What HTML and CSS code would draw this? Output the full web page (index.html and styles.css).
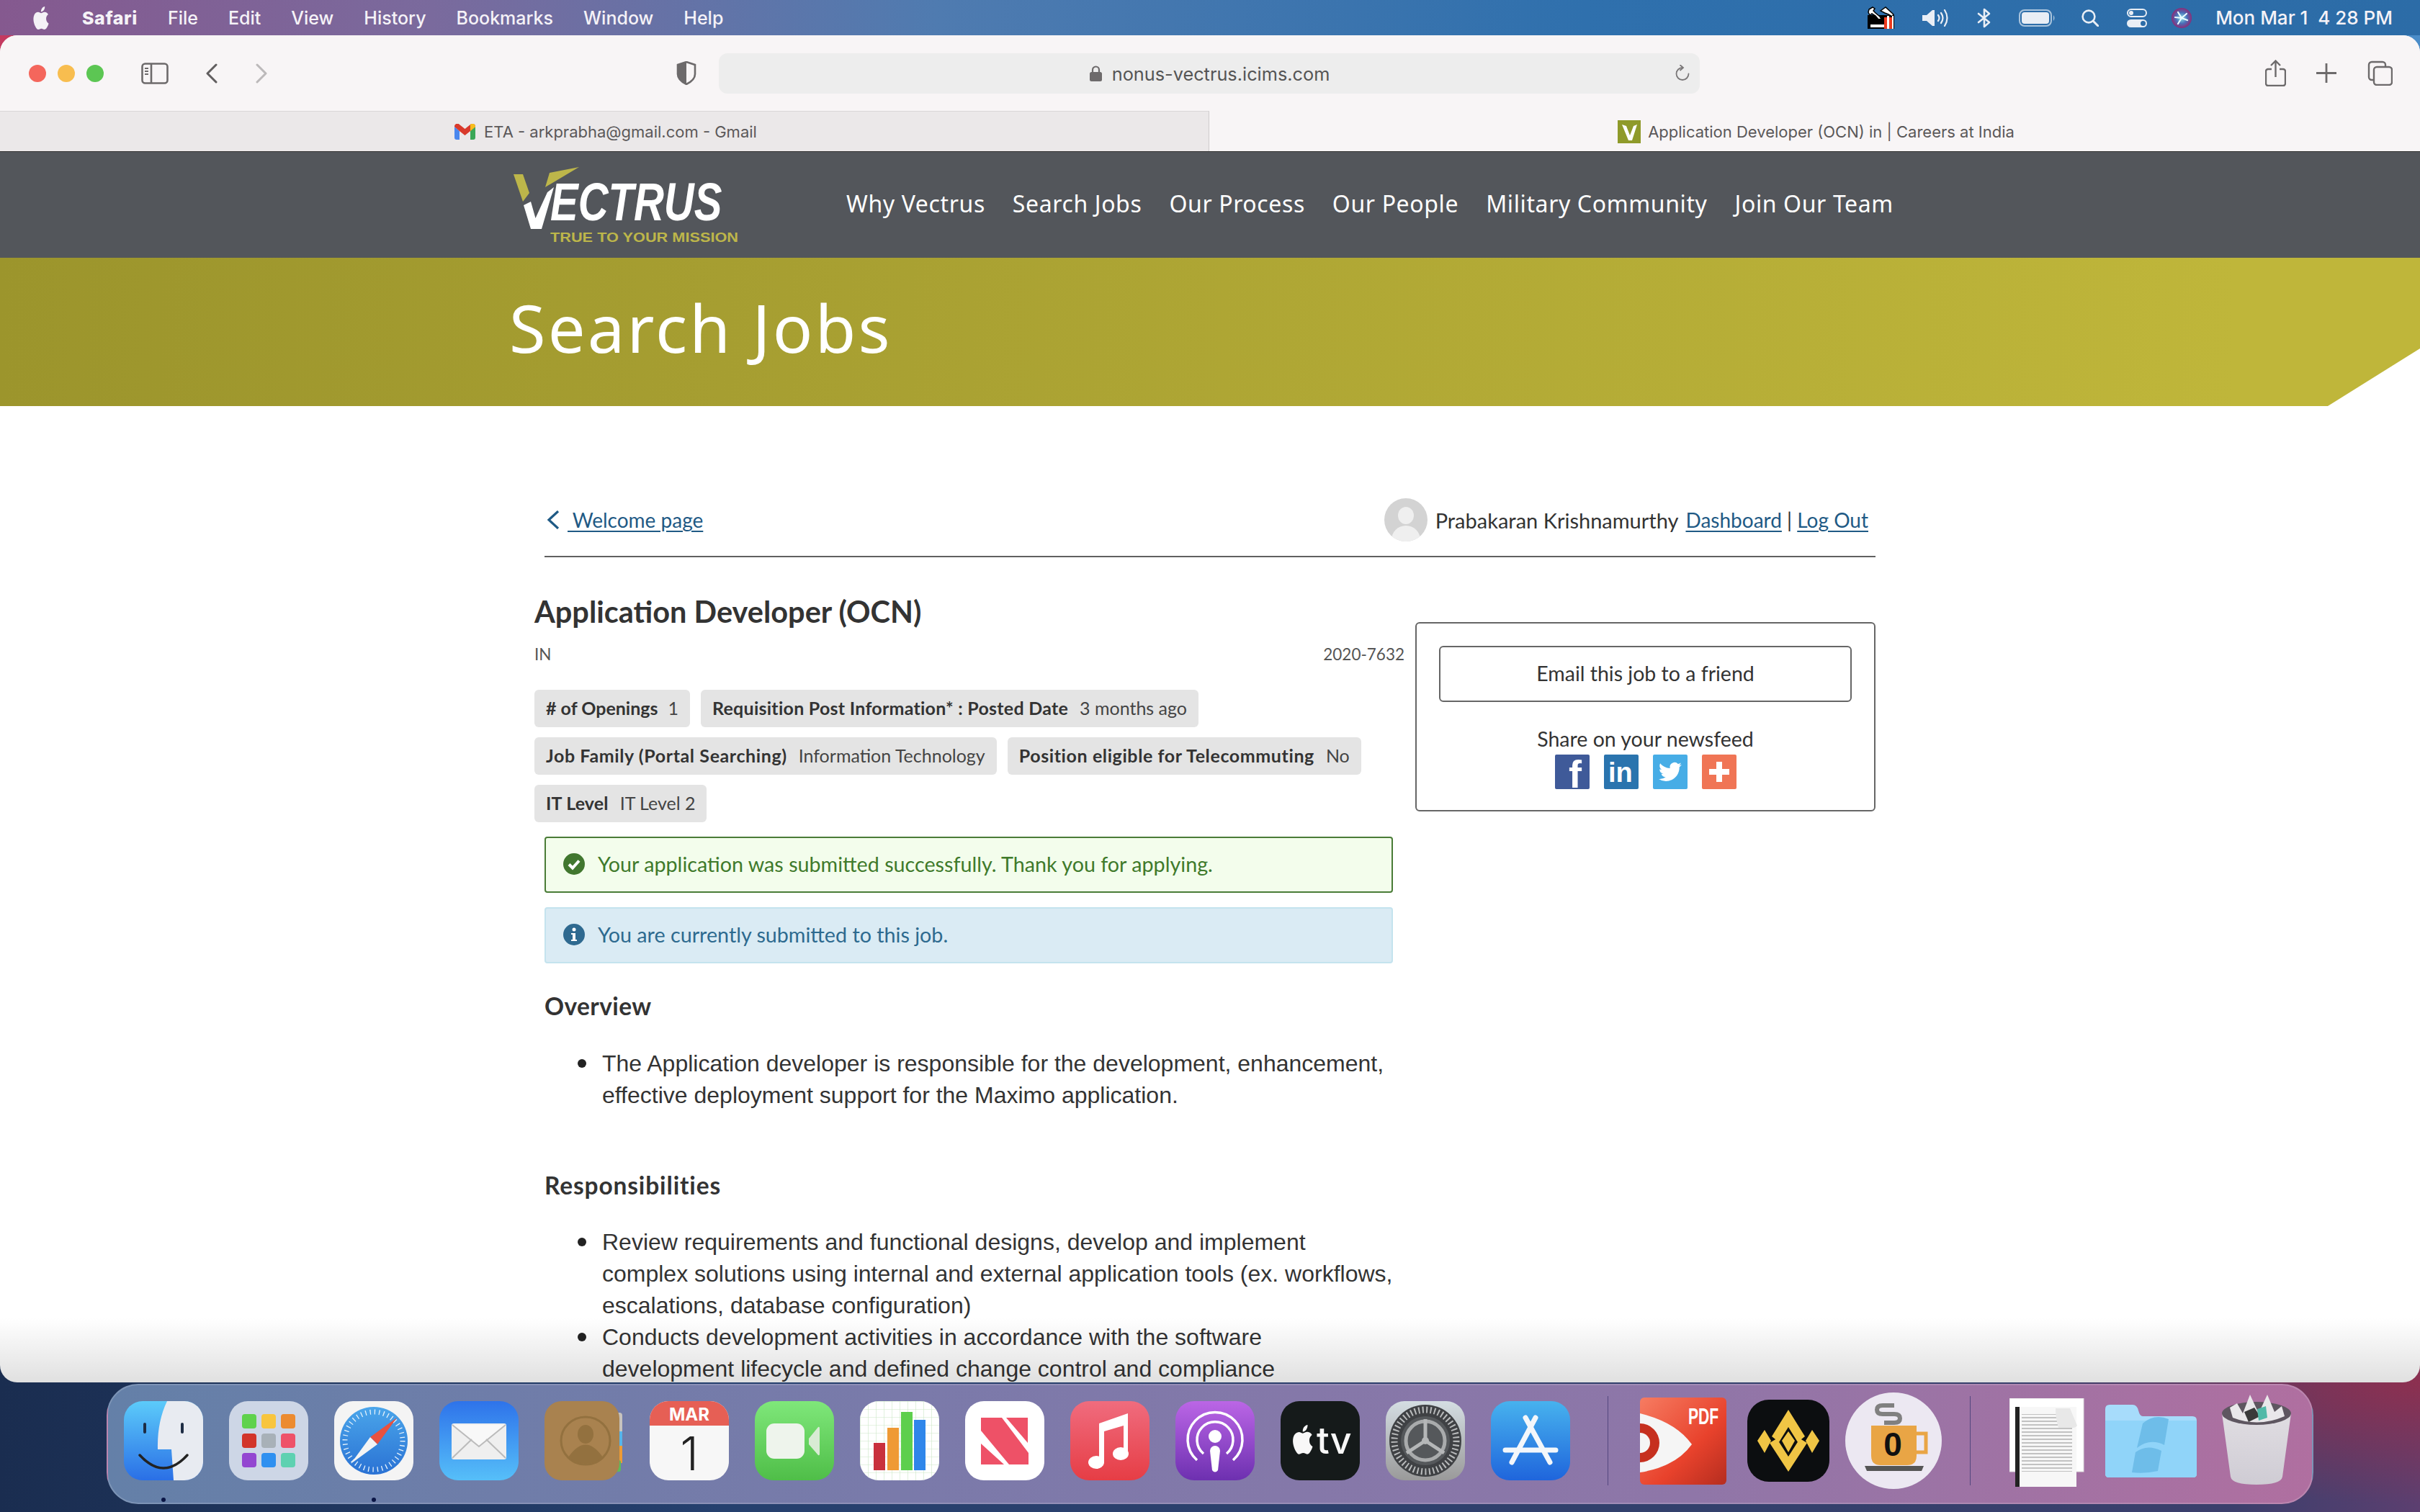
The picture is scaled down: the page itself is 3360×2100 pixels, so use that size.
FILE: index.html
```html
<!DOCTYPE html>
<html lang="en">
<head>
<meta charset="utf-8">
<title>Application Developer (OCN)</title>
<link rel="stylesheet" href="styles.css">
</head>
<body>
<header class="menubar">
  <svg class="apple" width="26" height="32" viewBox="0 0 24 24" preserveAspectRatio="none"><path fill="#f4f1f6" d="M12.152 6.896c-.948 0-2.415-1.078-3.96-1.04-2.04.027-3.91 1.183-4.961 3.014-2.117 3.675-.546 9.103 1.519 12.09 1.013 1.454 2.208 3.09 3.792 3.039 1.52-.065 2.09-.987 3.935-.987 1.831 0 2.35.987 3.96.948 1.637-.026 2.676-1.48 3.676-2.948 1.156-1.688 1.636-3.325 1.662-3.415-.039-.013-3.182-1.221-3.22-4.857-.026-3.04 2.48-4.494 2.597-4.559-1.429-2.09-3.623-2.324-4.39-2.376-2-.156-3.675 1.09-4.61 1.09zM15.53 3.83c.843-1.012 1.4-2.427 1.245-3.83-1.207.052-2.662.805-3.532 1.818-.78.896-1.454 2.338-1.273 3.714 1.338.104 2.715-.688 3.559-1.701"/></svg>
  <nav class="menu">
    <span class="menu-app">Safari</span><span>File</span><span>Edit</span><span>View</span><span>History</span><span>Bookmarks</span><span>Window</span><span>Help</span>
  </nav>
  <div class="status">
    <svg class="st-tools" width="39" height="33" viewBox="0 0 39 33"><path d="M1 13h37v19H1z" fill="#000"/><path d="M5 26h20v4H5z" fill="#fff"/><path d="M3 5l5-3 3 2-2 3 3 3 6 5 2 3-4 1-4-5-5-3-3 2-2-4z" fill="#fff" stroke="#000" stroke-width="1.500"/><path d="M19 7l7-5 11 10-2 3-5-3-5-2z" fill="#fff" stroke="#000" stroke-width="1.500"/><path d="M24 16h4v16h-4zM31 16h4v16h-4z" fill="#ee3a1e"/><path d="M28 14h3v18h-3z" fill="#fff"/><path d="M35 14h2v18h-2z" fill="#fff"/></svg>
    <svg class="st-speaker" width="36" height="24" viewBox="0 0 36 24"><path d="M0 8h6l8-7h3v22h-3l-8-7H0z" fill="#e9eef5"/><path d="M22 8q3 4 0 8M26 5q5 7 0 14M31 1q7 11 0 22" fill="none" stroke="#e9eef5" stroke-width="2.200" stroke-linecap="round"/></svg>
    <svg class="st-bt" width="20" height="28" viewBox="0 0 20 28"><path d="M2 8l15 12-7 6V2l7 6L2 20" fill="none" stroke="#e9eef5" stroke-width="2.600" stroke-linejoin="round" stroke-linecap="round"/></svg>
    <svg class="st-battery" width="51" height="24" viewBox="0 0 51 24"><rect x="1" y="1" width="44" height="22" rx="7" fill="none" stroke="#a9c4dd" stroke-width="2"/><rect x="4" y="4" width="38" height="16" rx="4" fill="#e9eef5"/><path d="M48 8q3 4 0 8z" fill="#a9c4dd"/></svg>
    <svg class="st-search" width="24" height="24" viewBox="0 0 24 24"><circle cx="10" cy="10" r="8.400" fill="none" stroke="#e9eef5" stroke-width="2.600"/><path d="M16 16l7 7" stroke="#e9eef5" stroke-width="3" stroke-linecap="round"/></svg>
    <svg class="st-control" width="28" height="26" viewBox="0 0 28 26"><rect x="1" y="1" width="26" height="10" rx="5" fill="none" stroke="#e9eef5" stroke-width="2"/><circle cx="6" cy="6" r="3" fill="#e9eef5"/><rect y="15" width="28" height="11" rx="5.500" fill="#e9eef5"/><circle cx="22.500" cy="20.500" r="3.500" fill="#2c6ca7"/></svg>
    <svg class="st-siri" width="28" height="28" viewBox="0 0 28 28"><defs><radialGradient id="siri"><stop offset="0" stop-color="#8fe8e8"/><stop offset=".55" stop-color="#4a6fb8"/><stop offset="1" stop-color="#8a2d78"/></radialGradient></defs><circle cx="14" cy="14" r="14" fill="url(#siri)"/><path d="M14 14L9 6M14 14l7-6M14 14l8 3M14 14l-5 8M14 14l-9-1" stroke="#eafcff" stroke-width="2.200" stroke-linecap="round"/></svg>
    <span class="clock">Mon Mar 1&nbsp; 4 28 PM</span>
  </div>
</header>

<main class="window">
  <div class="toolbar">
    <span class="light light-red"></span><span class="light light-yellow"></span><span class="light light-green"></span>
    <svg class="tb-side" width="38" height="30" viewBox="0 0 38 30"><rect x="1.500" y="1.500" width="35" height="27" rx="4" fill="none" stroke="#6d6a6b" stroke-width="2.600"/><path d="M14 2v26" stroke="#6d6a6b" stroke-width="2.600"/><path d="M5 8h5M5 12h5M5 16h5" stroke="#6d6a6b" stroke-width="2"/></svg>
    <svg class="tb-back" width="17" height="28" viewBox="0 0 17 28"><path d="M15 2L3 14l12 12" fill="none" stroke="#615e5f" stroke-width="3" stroke-linecap="round" stroke-linejoin="round"/></svg>
    <svg class="tb-fwd" width="17" height="28" viewBox="0 0 17 28"><path d="M2 2l12 12L2 26" fill="none" stroke="#bcb9ba" stroke-width="3" stroke-linecap="round" stroke-linejoin="round"/></svg>
    <svg class="tb-shield" width="28" height="33" viewBox="0 0 28 33"><path d="M14 1l12 4v13c0 7-6 11-12 14C8 29 2 25 2 18V5z" fill="#f8f5f6" stroke="#6d6a6b" stroke-width="2.600"/><path d="M14 1L2 5v13c0 7 6 11 12 14z" fill="#6d6a6b"/></svg>
    <div class="url">
      <svg class="url-lock" width="19" height="23" viewBox="0 0 19 23"><rect x="1" y="9" width="17" height="13" rx="2.500" fill="#6d6a6b"/><path d="M5 10V6a4.500 4.500 0 019 0v4" fill="none" stroke="#6d6a6b" stroke-width="2.200"/></svg>
      <span>nonus-vectrus.icims.com</span>
      <svg class="url-reload" width="24" height="24" viewBox="0 0 24 24"><path d="M12 4a8.500 8.500 0 1 0 8.500 8.500" fill="none" stroke="#7a7778" stroke-width="1.800" stroke-linecap="round"/><path d="M9 .5L13 4 9 7.500" fill="none" stroke="#7a7778" stroke-width="1.800" stroke-linecap="round"/></svg>
    </div>
    <svg class="tb-share" width="29" height="37" viewBox="0 0 29 37"><path d="M9 13H4a3 3 0 00-3 3v17a3 3 0 003 3h21a3 3 0 003-3V16a3 3 0 00-3-3h-5" fill="none" stroke="#6d6a6b" stroke-width="2.400"/><path d="M14.500 24V2M8 8l6.500-6.500L21 8" fill="none" stroke="#6d6a6b" stroke-width="2.400"/></svg>
    <svg class="tb-plus" width="28" height="27" viewBox="0 0 28 27"><path d="M14 0v27M0 13.500h28" stroke="#6d6a6b" stroke-width="2.800"/></svg>
    <svg class="tb-tabs" width="35" height="35" viewBox="0 0 35 35"><path d="M8 27H6a4 4 0 01-4-4V6a4 4 0 014-4h15a4 4 0 014 4v2" fill="none" stroke="#6d6a6b" stroke-width="2.400"/><rect x="9" y="9" width="25" height="25" rx="4" fill="none" stroke="#6d6a6b" stroke-width="2.400"/></svg>
  </div>

  <div class="tabs">
    <div class="tab tab-idle">
      <svg width="29" height="22" viewBox="0 0 29 22"><path d="M0 4v15a3 3 0 003 3h4V10z" fill="#4a87ee"/><path d="M29 4v15a3 3 0 01-3 3h-4V10z" fill="#3ba757"/><path d="M0 4a4 4 0 017-3l7.500 6L22 1a4 4 0 017 3l-7 6-7.500 6L7 10z" fill="#d93a2c"/><path d="M22 1a4 4 0 017 3l-7 6z" fill="#f6bd1b"/></svg>
      <span>ETA - arkprabha@gmail.com - Gmail</span>
    </div>
    <div class="tab tab-active">
      <svg width="32" height="32" viewBox="0 0 32 32"><rect width="32" height="32" fill="#8f9a2a"/><path d="M6 6l9 22h5l7-22-5 2-5 13-5-13z" fill="#fff"/></svg>
      <span>Application Developer (OCN) in | Careers at India</span>
    </div>
  </div>

  <div class="sitenav">
    <svg class="logo" width="340" height="120" viewBox="0 0 340 120">
      <polygon points="13,17 26,17 35,43 26,55" fill="#bdb64a"/>
      <polygon points="57,35 63,15 104,7" fill="#bdb64a"/>
      <polygon points="27,60 37,55 43.500,78 60,42 69,35 52,93 37,93" fill="#fff"/>
      <text class="logo-word" transform="translate(64 81) scale(1 1.270)">ECTRUS</text>
      <text class="logo-tag" x="64" y="111" textLength="261" lengthAdjust="spacingAndGlyphs">TRUE TO YOUR MISSION</text>
    </svg>
    <nav class="sitelinks">
      <a>Why Vectrus</a><a>Search Jobs</a><a>Our Process</a><a>Our People</a><a>Military Community</a><a>Join Our Team</a>
    </nav>
  </div>

  <div class="banner"><h1>Search Jobs</h1></div>

  <div class="page">
    <div class="userbar">
      <a class="back"><svg width="18" height="26" viewBox="0 0 18 26"><path d="M16 1L3 13l13 12" fill="none" stroke="#1f5a85" stroke-width="3.200"/></svg><span class="link back-link">&nbsp;Welcome page</span></a>
      <div class="user">
        <svg class="avatar" width="60" height="60" viewBox="0 0 60 60"><defs><clipPath id="av"><circle cx="30" cy="30" r="30"/></clipPath></defs><circle cx="30" cy="30" r="30" fill="#d3d3d3"/><g clip-path="url(#av)" fill="#efefef"><ellipse cx="30" cy="24" rx="11" ry="12"/><ellipse cx="30" cy="58" rx="20" ry="20"/></g></svg>
        <span class="user-name">Prabakaran Krishnamurthy</span>
        <span class="user-links"><span class="link">Dashboard</span> | <span class="link">Log Out</span></span>
      </div>
    </div>

    <div class="columns">
      <section class="job">
        <h2 class="job-title">Application Developer (OCN)</h2>
        <div class="job-meta"><span>IN</span><span>2020-7632</span></div>
        <div class="tags">
          <div class="tag tag-tight"><b># of Openings</b><span>1</span></div>
          <div class="tag tag-mid"><b>Requisition Post Information* : Posted Date</b><span>3 months ago</span></div>
          <div class="tag tag-wide"><b>Job Family (Portal Searching)</b><span>Information Technology</span></div>
          <div class="tag tag-wide"><b>Position eligible for Telecommuting</b><span>No</span></div>
          <div class="tag"><b>IT Level</b><span>IT Level 2</span></div>
        </div>
        <div class="body">
          <div class="alert alert-ok">
            <svg width="30" height="30" viewBox="0 0 30 30"><circle cx="15" cy="15" r="15" fill="#41772f"/><path d="M8 15.500l5 5 9-10" fill="none" stroke="#fff" stroke-width="4"/></svg>
            <span>Your application was submitted successfully. Thank you for applying.</span>
          </div>
          <div class="alert alert-info">
            <svg width="30" height="30" viewBox="0 0 30 30"><circle cx="15" cy="15" r="15" fill="#2f6a90"/><circle cx="15" cy="8" r="2.500" fill="#fff"/><path d="M11 13h6v9h2v2h-8v-2h2v-7h-2z" fill="#fff"/></svg>
            <span>You are currently submitted to this job.</span>
          </div>
          <h3>Overview</h3>
          <ul>
            <li>The Application developer is responsible for the development, enhancement, effective deployment support for the Maximo application.</li>
          </ul>
          <h3 class="h-resp">Responsibilities</h3>
          <ul>
            <li>Review requirements and functional designs, develop and implement complex solutions using internal and external application tools (ex. workflows, escalations, database configuration)</li>
            <li>Conducts development activities in accordance with the software development lifecycle and defined change control and compliance</li>
          </ul>
        </div>
      </section>

      <aside class="share">
        <button class="email">Email this job to a friend</button>
        <p>Share on your newsfeed</p>
        <div class="share-icons">
          <svg width="48" height="48" viewBox="0 0 48 48"><rect width="48" height="48" rx="2" fill="#3f5a99"/><text class="ic-f" x="19" y="46">f</text></svg>
          <svg width="48" height="48" viewBox="0 0 48 48"><rect width="48" height="48" rx="2" fill="#2a74ae"/><text class="ic-in" x="6" y="38">in</text></svg>
          <svg width="48" height="48" viewBox="0 0 48 48"><rect width="48" height="48" rx="2" fill="#47ade6"/><path transform="translate(8 8) scale(1.330)" fill="#fff" d="M23.953 4.570a10 10 0 01-2.825.775 4.958 4.958 0 002.163-2.723c-.951.555-2.005.959-3.127 1.184a4.920 4.920 0 00-8.384 4.482C7.690 8.095 4.067 6.130 1.640 3.162a4.822 4.822 0 00-.666 2.475c0 1.710.870 3.213 2.188 4.096a4.904 4.904 0 01-2.228-.616v.060a4.923 4.923 0 003.946 4.827 4.996 4.996 0 01-2.212.085 4.936 4.936 0 004.604 3.417 9.867 9.867 0 01-6.102 2.105c-.390 0-.779-.023-1.170-.067a13.995 13.995 0 007.557 2.209c9.053 0 13.998-7.496 13.998-13.985 0-.210 0-.420-.015-.630A9.935 9.935 0 0024 4.590z"/></svg>
          <svg width="48" height="48" viewBox="0 0 48 48"><rect width="48" height="48" rx="2" fill="#f07555"/><path d="M20 10h8v10h10v8H28v10h-8V28H10v-8h10z" fill="#fff"/></svg>
        </div>
      </aside>
    </div>
  </div>
</main>

<footer class="dock">
  <svg class="app" width="110" height="110" viewBox="0 0 110 110">
    <defs><linearGradient id="fb" x1="0" y1="0" x2="0" y2="1"><stop offset="0" stop-color="#5ccbfa"/><stop offset="1" stop-color="#2a6fe6"/></linearGradient><clipPath id="sq"><rect width="110" height="110" rx="26"/></clipPath></defs>
    <g clip-path="url(#sq)"><rect width="110" height="110" fill="url(#fb)"/><path d="M60 0h50v110H69l-3-43H47q-1-38 13-67z" fill="#e8ebf1"/></g>
    <path d="M29 32v11M81 32v11" stroke="#1d2c44" stroke-width="4" stroke-linecap="round"/>
    <path d="M22 75q33 36 66 0" fill="none" stroke="#222" stroke-width="3.500" stroke-linecap="round"/>
  </svg>
  <svg class="app" width="110" height="110" viewBox="0 0 110 110">
    <rect width="110" height="110" rx="26" fill="#cdd6e6"/>
    <rect x="18" y="18" width="20" height="20" rx="4" fill="#5fd24d"/><rect x="45" y="18" width="20" height="20" rx="4" fill="#f8c53e"/><rect x="72" y="18" width="20" height="20" rx="4" fill="#ec8b30"/>
    <rect x="18" y="45" width="20" height="20" rx="4" fill="#d2352a"/><rect x="45" y="45" width="20" height="20" rx="4" fill="#a8b1b8"/><rect x="72" y="45" width="20" height="20" rx="4" fill="#ee5269"/>
    <rect x="18" y="72" width="20" height="20" rx="4" fill="#9347d1"/><rect x="45" y="72" width="20" height="20" rx="4" fill="#2f90f0"/><rect x="72" y="72" width="20" height="20" rx="4" fill="#5ed1b1"/>
  </svg>
  <svg class="app" width="110" height="110" viewBox="0 0 110 110">
    <defs><linearGradient id="sb" x1="0" y1="0" x2="0" y2="1"><stop offset="0" stop-color="#4aa5ea"/><stop offset="1" stop-color="#2a72d4"/></linearGradient></defs>
    <rect width="110" height="110" rx="26" fill="#f4f4f4"/><circle cx="55" cy="55" r="47" fill="url(#sb)"/>
    <circle cx="55" cy="55" r="40" fill="none" stroke="#e6f2fb" stroke-width="7" stroke-dasharray="1.300 5"/>
    <polygon points="87,23 50,50 60,60" fill="#e8513f"/><polygon points="23,87 50,50 60,60" fill="#f4f4f4"/>
  </svg>
  <svg class="app" width="110" height="110" viewBox="0 0 110 110">
    <defs><linearGradient id="mb" x1="0" y1="0" x2="0" y2="1"><stop offset="0" stop-color="#2e73ea"/><stop offset="1" stop-color="#56bff9"/></linearGradient></defs>
    <rect width="110" height="110" rx="26" fill="url(#mb)"/><rect x="17" y="31" width="76" height="50" rx="3" fill="#efefef"/>
    <path d="M18 33l37 30 37-30" fill="#f8f8f8" stroke="#bbb" stroke-width="2"/><path d="M18 79l27-26M92 79L65 53" stroke="#bbb" stroke-width="2"/>
  </svg>
  <svg class="app" width="110" height="110" viewBox="0 0 110 110">
    <rect x="94" y="16" width="14" height="32" rx="4" fill="#c7c3bd"/><rect x="94" y="42" width="14" height="24" fill="#55b5ea"/><rect x="94" y="62" width="14" height="24" fill="#ed9b34"/><rect x="94" y="82" width="12" height="16" rx="3" fill="#5dbb5b"/>
    <rect width="104" height="110" rx="24" fill="#a9824f"/><ellipse cx="57" cy="55" rx="34" ry="33" fill="none" stroke="#93713f" stroke-width="3"/><ellipse cx="57" cy="46" rx="11" ry="13" fill="#93713f"/><path d="M33 78q24-35 48 0q-24 18-48 0" fill="#93713f"/>
  </svg>
  <svg class="app" width="110" height="110" viewBox="0 0 110 110">
    <defs><clipPath id="cal"><rect width="110" height="110" rx="26"/></clipPath></defs>
    <g clip-path="url(#cal)"><rect width="110" height="110" fill="#f7f7f7"/><rect width="110" height="34" fill="#e65f55"/></g>
    <text class="cal-mon" x="55" y="27">MAR</text><text class="cal-day" x="55" y="96">1</text>
  </svg>
  <svg class="app" width="110" height="110" viewBox="0 0 110 110">
    <defs><linearGradient id="ft" x1="0" y1="0" x2="0" y2="1"><stop offset="0" stop-color="#7fe77a"/><stop offset="1" stop-color="#4fbe48"/></linearGradient></defs>
    <rect width="110" height="110" rx="26" fill="url(#ft)"/><rect x="16" y="31" width="53" height="49" rx="11" fill="#eef4ec"/><path d="M75 52l13-16q2-1 2 2v35q0 3-2 2L75 60z" fill="#d8ebd4"/>
  </svg>
  <svg class="app" width="110" height="110" viewBox="0 0 110 110">
    <defs><pattern id="gr" width="11" height="11" patternUnits="userSpaceOnUse"><path d="M11 0H0v11" fill="none" stroke="#cde8c8" stroke-width="1.200"/></pattern><clipPath id="nu"><rect width="110" height="110" rx="26"/></clipPath></defs>
    <g clip-path="url(#nu)"><rect width="110" height="110" fill="#fff"/><rect width="110" height="110" fill="url(#gr)"/></g>
    <rect x="19" y="58" width="16" height="38" fill="#c9303c"/><rect x="38" y="37" width="16" height="59" fill="#ef9a35"/><rect x="57" y="15" width="16" height="81" fill="#5dcf4d"/><rect x="75" y="26" width="16" height="70" fill="#2f86ea"/>
  </svg>
  <svg class="app" width="110" height="110" viewBox="0 0 110 110">
    <rect width="110" height="110" rx="26" fill="#fff"/>
    <polygon points="22,23 51,23 88,72 88,88 61,88 22,41" fill="#ee5167"/><polygon points="57,23 87,23 87,58" fill="#ee5167"/><polygon points="22,59 22,88 54,88" fill="#ee5167"/>
  </svg>
  <svg class="app" width="110" height="110" viewBox="0 0 110 110">
    <defs><linearGradient id="mu" x1="0" y1="0" x2="0" y2="1"><stop offset="0" stop-color="#f06c7e"/><stop offset="1" stop-color="#e63d45"/></linearGradient></defs>
    <rect width="110" height="110" rx="26" fill="url(#mu)"/><path d="M40 31l40-14v53h-6V34L47 42v43h-7z" fill="#fff"/><ellipse cx="36" cy="85" rx="11" ry="9" fill="#fff"/><ellipse cx="70" cy="73" rx="11" ry="9" fill="#fff"/>
  </svg>
  <svg class="app" width="110" height="110" viewBox="0 0 110 110">
    <defs><linearGradient id="po" x1="0" y1="0" x2="0" y2="1"><stop offset="0" stop-color="#bb66e6"/><stop offset="1" stop-color="#6d30b0"/></linearGradient></defs>
    <rect width="110" height="110" rx="26" fill="url(#po)"/><path d="M30 82a38 38 0 1150 0" fill="none" stroke="#fff" stroke-width="3.500"/><path d="M39 73a25 25 0 1132 0" fill="none" stroke="#fff" stroke-width="3.500"/><circle cx="55" cy="49" r="9" fill="#fff"/><path d="M48 69a7 7 0 0114 0l-3 27q-4 5-8 0z" fill="#fff"/>
  </svg>
  <svg class="app" width="110" height="110" viewBox="0 0 110 110">
    <rect width="110" height="110" rx="26" fill="#151a1a"/><path transform="translate(14 33) scale(1.400 1.700)" fill="#f8f8f8" d="M12.152 6.896c-.948 0-2.415-1.078-3.960-1.040-2.040.027-3.910 1.183-4.961 3.014-2.117 3.675-.546 9.103 1.519 12.090 1.013 1.454 2.208 3.090 3.792 3.039 1.520-.065 2.090-.987 3.935-.987 1.831 0 2.350.987 3.960.948 1.637-.026 2.676-1.480 3.676-2.948 1.156-1.688 1.636-3.325 1.662-3.415-.039-.013-3.182-1.221-3.220-4.857-.026-3.040 2.480-4.494 2.597-4.559-1.429-2.090-3.623-2.324-4.390-2.376-2-.156-3.675 1.090-4.610 1.090zM15.530 3.830c.843-1.012 1.400-2.427 1.245-3.830-1.207.052-2.662.805-3.532 1.818-.780.896-1.454 2.338-1.273 3.714 1.338.104 2.715-.688 3.559-1.701"/><text class="tv" x="50" y="73">tv</text>
  </svg>
  <svg class="app" width="110" height="110" viewBox="0 0 110 110">
    <defs><linearGradient id="sp" x1="0" y1="0" x2="0" y2="1"><stop offset="0" stop-color="#d4dde2"/><stop offset="1" stop-color="#9a9a9a"/></linearGradient></defs>
    <rect width="110" height="110" rx="26" fill="url(#sp)"/><circle cx="55" cy="55" r="50" fill="#3f4144"/><circle cx="55" cy="55" r="43" fill="none" stroke="#b8babb" stroke-width="9" stroke-dasharray="2 3.500"/><circle cx="55" cy="55" r="34" fill="#55585b"/><circle cx="55" cy="55" r="27" fill="none" stroke="#a9abac" stroke-width="5"/><path d="M55 55V25M55 55L29 72M55 55l26 17" stroke="#b5b7b8" stroke-width="5"/><circle cx="55" cy="55" r="5" fill="#b5b7b8"/>
  </svg>
  <svg class="app" width="110" height="110" viewBox="0 0 110 110">
    <defs><linearGradient id="as" x1="0" y1="0" x2="0" y2="1"><stop offset="0" stop-color="#47b2ee"/><stop offset="1" stop-color="#1f65dc"/></linearGradient></defs>
    <rect width="110" height="110" rx="26" fill="url(#as)"/><path d="M62 23L29 85M48 23L82 85M20 68h70" fill="none" stroke="#f3f7fb" stroke-width="7" stroke-linecap="round"/>
  </svg>
  <span class="dock-sep"></span>
  <svg class="app app-pdf" width="120" height="121" viewBox="0 0 120 121">
    <defs><linearGradient id="pdf" x1="0" y1="0" x2="1" y2="1"><stop offset="0" stop-color="#f67c62"/><stop offset=".6" stop-color="#e8422c"/><stop offset="1" stop-color="#b52d1f"/></linearGradient><clipPath id="pc"><rect width="120" height="121" rx="6"/></clipPath></defs>
    <g clip-path="url(#pc)"><rect width="120" height="121" fill="url(#pdf)"/><path d="M0 22q50 12 72 43Q50 96 0 104z" fill="#f5f5f5"/><circle cx="0" cy="63" r="27" fill="#c6301f"/><circle cx="0" cy="63" r="14" fill="#f5f5f5"/></g>
    <text class="pdf-t" transform="translate(67 37) scale(.660 1)">PDF</text>
  </svg>
  <svg class="app app-bin" width="114" height="114" viewBox="0 0 114 114">
    <rect width="114" height="114" rx="30" fill="#0c0e10"/>
    <g fill="#f0c545"><path d="M57 14l23 37-10 8-13-21-13 21-10-8z"/><path d="M14 57l10-15 9 15-9 17zM57 44l9 13-9 16-9-16zM100 57l-10-15-9 15 9 17z"/><path d="M57 100L31 60l10-6 16 25 16-25 10 6z"/></g>
  </svg>
  <svg class="app app-coffee" width="134" height="134" viewBox="0 0 134 134">
    <circle cx="67" cy="67" r="67" fill="#ece8f2"/>
    <path d="M68 18H52q-8 0-8 6t8 6h16q8 0 8 6t-8 6H54" fill="none" stroke="#808080" stroke-width="6"/>
    <path d="M36 46h63v42q0 13-13 13H49q-13 0-13-13z" fill="#e9a545"/><path d="M99 57h13v26H99" fill="none" stroke="#e9a545" stroke-width="5"/>
    <path d="M27 102h82l-3 7H30z" fill="#555"/>
    <text class="cup-0" x="66" y="88">0</text>
  </svg>
  <span class="dock-sep dock-sep2"></span>
  <svg class="app app-doc" width="105" height="123" viewBox="0 0 105 123">
    <defs><pattern id="ln" width="60" height="5" patternUnits="userSpaceOnUse"><path d="M0 2h60" stroke="#8d8d8d" stroke-width="1"/></pattern></defs>
    <rect width="103" height="102" fill="#fff" stroke="#ddd"/><rect x="8" y="12" width="85" height="111" fill="#f7f7f7"/><rect x="8" y="12" width="6" height="111" fill="#222"/>
    <rect x="17" y="22" width="70" height="80" fill="url(#ln)"/><path d="M64 14h20l10 24q-2 3-5 3H68q-4-13-4-27z" fill="#e8e8e8"/>
  </svg>
  <svg class="app app-folder" width="127" height="101" viewBox="0 0 127 101">
    <path d="M0 6q0-6 6-6h32q6 0 8 8t6 8h69q6 0 6 6v74q0 5-5 5H5q-5 0-5-5z" fill="#a7dcfb"/><path d="M0 22h127v74q0 5-5 5H5q-5 0-5-5z" fill="#90d4f9"/><path d="M44 60q18-14 38-4l6-36q-20-8-36 6zM42 66q16-12 36-2l-5 28q-18 4-36 2z" fill="#6ebde9"/>
  </svg>
  <svg class="app app-trash" width="98" height="127" viewBox="0 0 98 127">
    <defs><linearGradient id="tr" x1="0" y1="0" x2="0" y2="1"><stop offset="0" stop-color="#e0dde2"/><stop offset="1" stop-color="#cfccd4"/></linearGradient></defs>
    <path d="M1 28q48 20 96 0l-12 88q-2 11-36 11T13 116z" fill="url(#tr)"/><ellipse cx="49" cy="28" rx="48" ry="16" fill="#5e5660"/><path d="M12 20l10-6 8 14 10-26 12 26 12-26 10 24 10-8 4 14q-36 16-72 2z" fill="#e9e7ea"/><path d="M32 26l14-6 8 12-16 8z" fill="#3a3a3a"/><path d="M50 22l12-4 2 16-12 4z" fill="#51b9a8"/>
  </svg>
  <span class="dot dot-a"></span><span class="dot dot-b"></span>
</footer>
</body>
</html>
```
FILE: styles.css
```css
* { box-sizing: border-box; }
html, body { margin: 0; padding: 0; }
body {
  width: 3360px;
  height: 2100px;
  overflow: hidden;
  position: relative;
  display: flex;
  flex-direction: column;
  font-family: "Lato", "Liberation Sans", sans-serif;
  background:
    linear-gradient(90deg, #c43a60 650px, #4a8cc8 650px) 0 45px / 100% 40px no-repeat,
    radial-gradient(520px 170px at 3360px 1920px, #8c3050 0, rgba(140, 48, 80, 0) 100%),
    linear-gradient(90deg, #1a2d50 0, #25406e 1000px, #33406c 2400px, #3b3f6c 3100px, #5c3f70 3360px);
}

/* menu bar */
.menubar {
  height: 49px;
  flex: none;
  display: flex;
  align-items: center;
  padding: 0 38px 0 44px;
  color: #f5f2f7;
  font-family: "Inter", "Liberation Sans", sans-serif;
  font-size: 25px;
  background: linear-gradient(90deg, #85598f 0, #7a6a9d 600px, #4f7bb0 1300px, #2f70ad 2200px, #2c6ca7 3360px);
}
.apple { margin-right: 44px; }
.menu { display: flex; gap: 42px; font-weight: 500; }
.menu-app { font-weight: 800; letter-spacing: .6px; }
.status { margin-left: auto; display: flex; align-items: center; gap: 36px; }
.st-tools { margin-right: 2px; }
.st-speaker { margin-right: 4px; }
.st-bt { margin-right: 2px; }
.st-search { margin-right: 3px; }
.st-control { margin-right: -2px; }
.st-siri { margin-right: -3px; }
.clock { font-weight: 500; font-size: 26px; }

/* window */
.window {
  height: 1871px;
  flex: none;
  position: relative;
  overflow: hidden;
  display: flex;
  flex-direction: column;
  background: #fff;
  border-radius: 24px;
}
.window::after {
  content: "";
  position: absolute;
  left: 0;
  right: 0;
  bottom: 0;
  height: 90px;
  background: linear-gradient(180deg, rgba(0, 0, 0, 0), rgba(0, 0, 0, .12));
  pointer-events: none;
}
.toolbar {
  height: 105px;
  flex: none;
  display: flex;
  align-items: center;
  padding: 0 38px 0 40px;
  background: #f8f5f6;
}
.light { width: 24px; height: 24px; border-radius: 50%; margin-right: 16px; }
.light-red { background: #f4665c; }
.light-yellow { background: #f8bd4f; }
.light-green { background: #5cc653; }
.tb-side { margin-left: 36px; }
.tb-back { margin-left: 51px; }
.tb-fwd { margin-left: 53px; }
.tb-shield { margin-left: 567px; }
.url {
  width: 1362px;
  height: 56px;
  margin-left: 31px;
  padding-top: 2px;
  position: relative;
  display: flex;
  align-items: center;
  justify-content: center;
  gap: 13px;
  border-radius: 12px;
  background: #ededed;
  font-family: "Inter", "Liberation Sans", sans-serif;
  font-size: 25.300px;
  color: #555;
}
.url-reload { position: absolute; right: 12px; top: 16px; }
.tb-share { margin-left: auto; }
.tb-plus { margin-left: 42px; }
.tb-tabs { margin-left: 43px; }

.tabs {
  height: 56px;
  flex: none;
  display: grid;
  grid-template-columns: 1679px 1fr;
  font-family: "Inter", "Liberation Sans", sans-serif;
  font-size: 22px;
  color: #5b5859;
}
.tab { display: flex; align-items: center; justify-content: center; gap: 12px; }
.tab-idle { background: #ebe8e9; border-top: 1px solid #d9d6d7; border-right: 1px solid #cfcccd; padding-left: 4px; }
.tab-active { background: #f8f5f6; border-top: 1px solid #f8f5f6; gap: 10px; padding-left: 4px; }

/* site header */
.sitenav {
  height: 148px;
  flex: none;
  display: flex;
  align-items: center;
  padding-left: 700px;
  background: #53565b;
  border-top: 1px solid #333;
}
.logo { flex: none; }
.logo-word { font: italic 700 58px "Liberation Sans", sans-serif; fill: #fff; }
.logo-tag { font: 700 18px "Liberation Sans", sans-serif; fill: #bdb64a; }
.sitelinks {
  display: flex;
  gap: 38px;
  margin-left: 135px;
  padding-bottom: 4px;
  color: #fff;
  font-family: "Noto Sans", sans-serif;
  font-size: 32px;
  letter-spacing: .62px;
}
.banner {
  height: 206px;
  flex: none;
  padding: 0 0 14px 707px;
  display: flex;
  align-items: center;
  background: linear-gradient(90deg, #9c952c 0, #a69e31 1000px, #bfb63a 3100px);
  clip-path: polygon(0 0, 100% 0, 100% 126px, 3232px 100%, 0 100%);
}
.banner h1 {
  margin: 0;
  font-family: "Noto Sans", sans-serif;
  font-weight: 400;
  font-size: 92px;
  letter-spacing: 3.200px;
  color: #fff;
}

/* page */
.page { width: 1862px; margin-left: 742px; color: #333; }
.userbar {
  margin-top: 130px;
  margin-left: 14px;
  height: 80px;
  padding-right: 10px;
  display: flex;
  justify-content: space-between;
  align-items: flex-start;
  border-bottom: 2px solid #606060;
  font-size: 29px;
}
.back { display: flex; align-items: center; height: 56px; padding-left: 3px; font-size: 28px; }
.back-link { margin-left: 11px; }
.link { color: #1f5a85; text-decoration: underline; text-underline-offset: 4px; }
.user { display: flex; align-items: center; height: 56px; }
.user-name { margin-left: 11px; }
.user-links { margin-left: 10px; font-size: 28px; }
.columns {
  display: grid;
  grid-template-columns: 1208px 639px;
  column-gap: 15px;
  margin-top: 47px;
  align-items: start;
}
.job-title { margin: 0; font-size: 41.500px; line-height: 56px; font-weight: 700; color: #333; }
.job-meta {
  margin-top: 17px;
  display: flex;
  justify-content: space-between;
  font-size: 22.500px;
  line-height: 30px;
  color: #555;
}
.tags { margin-top: 34px; display: flex; flex-wrap: wrap; gap: 14px 15px; }
.tag {
  height: 52px;
  padding: 0 16px 3px;
  display: flex;
  align-items: center;
  gap: 16px;
  border-radius: 6px;
  background: #e4e4e4;
  font-size: 25px;
}
.tag b { letter-spacing: .15px; }
.tag-tight { gap: 14px; }
.tag-tight b { letter-spacing: 0; }
.tag-mid b { letter-spacing: .26px; }
.tag-wide b { letter-spacing: .6px; }
.tag span { color: #444; }
.body { margin: 20px 0 0 14px; }
.alert {
  width: 1178px;
  height: 78px;
  padding: 0 0 3px 24px;
  display: flex;
  align-items: center;
  gap: 18px;
  border-radius: 4px;
  font-size: 28.700px;
}
.alert-ok { background: #f3fdec; border: 2px solid #4a7c37; color: #3f7a2b; }
.alert-info { margin-top: 20px; background: #daebf4; border: 2px solid #c4e3ee; color: #2d6a8f; }
h3 { margin: 39px 0 0; font-size: 33.500px; line-height: 40px; font-weight: 700; letter-spacing: .4px; color: #333; }
.h-resp { margin-top: 83px; letter-spacing: .85px; }
ul {
  margin: 38px 0 0;
  padding: 0 0 0 80px;
  width: 1180px;
  list-style: none;
  font-family: "Liberation Sans", sans-serif;
  font-size: 32px;
  line-height: 44px;
  color: #333;
}
.h-resp + ul { margin-top: 37px; }
li { position: relative; }
li::before {
  content: "";
  position: absolute;
  left: -34px;
  top: 16px;
  width: 12px;
  height: 12px;
  border-radius: 50%;
  background: #222;
}

/* share panel */
.share {
  margin-top: 43px;
  height: 263px;
  padding: 31px 31px 0;
  border: 2px solid #666;
  border-radius: 6px;
  text-align: center;
}
.email {
  display: block;
  width: 100%;
  height: 78px;
  padding: 0 0 3px;
  border: 2px solid #666;
  border-radius: 6px;
  background: #fff;
  font: 28.500px "Lato", sans-serif;
  color: #333;
}
.share p { margin: 33px 0 0; font-size: 28.500px; line-height: 36px; }
.share-icons { display: flex; justify-content: center; gap: 20px; margin-top: 4px; }
.share-icons svg { overflow: visible; }
.ic-f { font: 700 54px "Liberation Sans", sans-serif; fill: #fff; }
.ic-in { font: 700 38px "Liberation Sans", sans-serif; fill: #fff; }

/* dock */
.dock {
  position: absolute;
  left: 148px;
  top: 1922px;
  width: 3064px;
  height: 167px;
  padding: 0 0 9px 22px;
  display: flex;
  align-items: center;
  gap: 36px;
  border: 2px solid rgba(255, 255, 255, .16);
  border-radius: 44px;
  background: linear-gradient(90deg, #6480a8 0, #7a7aaa 1100px, #8f76a8 2200px, #b06fa0 3064px);
}
.app { flex: none; }
.dock-sep { width: 1px; height: 124px; flex: none; margin-left: 16px; background: #54477f; }
.app-pdf { margin-left: 8px; margin-right: -7px; }
.app-bin { margin-right: -14px; }
.app-coffee { margin-right: 3px; }
.dock-sep2 { margin-left: 0; }
.app-doc { margin: 5px -8px 0 18px; }
.app-folder { margin-right: -2px; }
.app-trash { margin-top: -5px; }
.dot { position: absolute; width: 6px; height: 6px; border-radius: 50%; background: #0a1545; top: 156px; }
.dot-a { left: 74px; }
.dot-b { left: 366px; }
.cal-mon { font: 700 24px "Inter", sans-serif; fill: #fff; text-anchor: middle; }
.cal-day { font: 300 64px "Inter", sans-serif; fill: #222; text-anchor: middle; }
.tv { font: 500 52px "Inter", sans-serif; fill: #f8f8f8; }
.pdf-t { font: 700 32px "Liberation Sans", sans-serif; fill: #fff; }
.cup-0 { font: 700 46px "Liberation Sans", sans-serif; fill: #111; text-anchor: middle; }
```
